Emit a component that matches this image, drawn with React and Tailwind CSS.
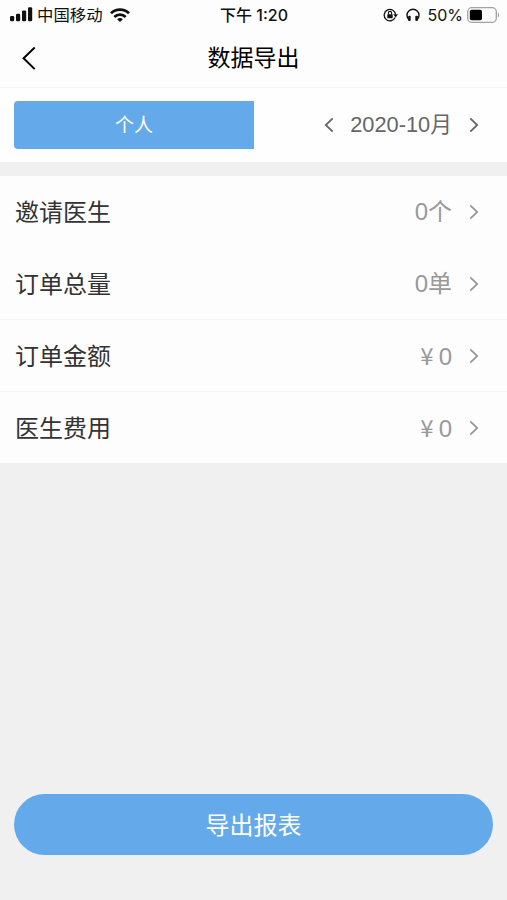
// ============================================
// DATA EXPORT PAGE - MOBILE
// ============================================

const Chevron = ({ left = false, className = "" }) => (
    <svg
        viewBox="0 0 10 16"
        className={`h-4 w-2.5 shrink-0 ${className}`}
        fill="none"
        stroke="currentColor"
        strokeWidth="1.8"
    >
        <path d={left ? "M8.7 1.4 1.8 8l6.9 6.6" : "M1.3 1.4 8.2 8l-6.9 6.6"} />
    </svg>
)

const SignalIcon = () => (
    <svg viewBox="0 0 23 15" className="h-[15px] w-[23px]" fill="currentColor">
        <rect x="0" y="9" width="4.2" height="5.2" rx="1.2" />
        <rect x="6" y="6.8" width="4.2" height="7.4" rx="1.2" />
        <rect x="12" y="3.4" width="4.2" height="10.8" rx="1.2" />
        <rect x="18" y="0.2" width="4.2" height="14" rx="1.2" />
    </svg>
)

const WifiIcon = () => (
    <svg
        viewBox="0 0 20 14"
        className="h-[14px] w-5"
        fill="none"
        stroke="currentColor"
        strokeWidth="2.8"
    >
        <path d="M1 5.2a13 13 0 0 1 18 0" />
        <path d="M4.3 9a8.2 8.2 0 0 1 11.4 0" />
        <path
            d="M10 13.9 7.1 11.3a4.2 4.2 0 0 1 5.8 0z"
            fill="currentColor"
            stroke="none"
        />
    </svg>
)

const RotationLockIcon = () => (
    <svg viewBox="0 0 15 14" className="h-[14px] w-[15px]" fill="none" stroke="currentColor">
        <path d="M12.1 9.5A5.7 5.7 0 1 1 12.6 6.8" strokeWidth="1.3" />
        <path d="M10.3 6.2h4.7l-2.3 3.3z" fill="currentColor" stroke="none" />
        <rect x="4.3" y="6.2" width="5.4" height="4" rx="0.6" fill="currentColor" stroke="none" />
        <path d="M5.4 6.4V5a1.6 1.6 0 0 1 3.2 0v1.4" strokeWidth="1.1" />
    </svg>
)

const HeadphonesIcon = () => (
    <svg viewBox="0 0 14 14" className="h-[14px] w-[14px]" fill="none" stroke="currentColor">
        <path d="M3.2 12C1.6 10.7 1 9 1 7.2a6 6 0 0 1 12 0c0 1.8-.6 3.5-2.2 4.8" strokeWidth="1.4" />
        <rect x="2.1" y="7.8" width="2.6" height="5.2" rx="1" fill="currentColor" stroke="none" />
        <rect x="9.3" y="7.8" width="2.6" height="5.2" rx="1" fill="currentColor" stroke="none" />
    </svg>
)

const BatteryIcon = () => (
    <svg viewBox="0 0 33 16" className="h-4 w-[33px]">
        <rect x="0.7" y="0.7" width="28.6" height="14.6" rx="4" fill="none" stroke="#a3a3a3" strokeWidth="1.3" />
        <rect x="2.8" y="2.8" width="12.2" height="10.4" rx="1.8" fill="#000" />
        <path d="M30.8 5.4c1.7.6 1.7 4.6 0 5.2z" fill="#a3a3a3" />
    </svg>
)

const rows = [
    { id: "invite", label: "邀请医生", value: "0个", border: false },
    { id: "orders", label: "订单总量", value: "0单", border: true },
    { id: "amount", label: "订单金额", currency: "¥", value: "0", border: true },
    { id: "fee", label: "医生费用", currency: "¥", value: "0", border: false },
]

const App = () => {
    return (
        <div className="flex h-[900px] w-[507px] flex-col overflow-hidden bg-[#f0f0f0] font-['Liberation_Sans','Noto_Sans_CJK_SC',sans-serif] text-[#333]">
            {/* STATUS BAR */}
            <div className="grid h-[29px] shrink-0 grid-cols-[1fr_auto_1fr] items-center bg-[#fdfdfd] pr-[7px] pl-[10px] font-['Inter','Noto_Sans_CJK_SC',sans-serif] text-[#111]">
                <div className="flex items-center">
                    <SignalIcon />
                    <span className="mr-[7px] ml-[4px] pt-0.5 text-[16.4px] leading-[27px]">中国移动</span>
                    <WifiIcon />
                </div>
                <span className="-ml-0.5 pt-0.5 text-[16px] leading-[27px] font-medium">下午 1:20</span>
                <div className="flex items-center justify-end">
                    <RotationLockIcon />
                    <span className="w-[8px]" />
                    <HeadphonesIcon />
                    <span className="mr-[4px] ml-[7px] pt-0.5 text-[16px] leading-[27px]">50%</span>
                    <BatteryIcon />
                </div>
            </div>

            {/* HEADER */}
            <header className="grid h-[59px] shrink-0 grid-cols-[1fr_auto_1fr] items-center border-b border-[#f5f5f5] bg-[#fdfdfd] px-[21px] text-black">
                <button aria-label="返回">
                    <svg viewBox="0 0 15 24" className="h-6 w-[15px]" fill="none" stroke="currentColor" strokeWidth="2">
                        <path d="M13.7 1.5 2.6 12.3l11.1 10.8" />
                    </svg>
                </button>
                <h1 className="text-[23px] leading-[58px]">数据导出</h1>
            </header>

            {/* FILTER BAR */}
            <div className="flex h-[74px] shrink-0 items-center justify-between bg-[#fefefe] pr-[28px] pl-[14px]">
                <button className="h-12 w-60 rounded-l-[4px] bg-[#64aaeb] pt-[3px] text-[19px] text-white">
                    个人
                </button>
                <div className="flex items-center text-[#666]">
                    <Chevron left />
                    <span className="mr-[17px] ml-[16px] text-[21.8px] leading-8">2020-10月</span>
                    <Chevron />
                </div>
            </div>

            {/* STATS LIST */}
            <ul className="mt-[14px] shrink-0 bg-[#fdfdfd]">
                {rows.map((row) => (
                    <li
                        key={row.id}
                        className={`flex h-[72px] items-center border-b pr-[28px] pl-[15px] text-[24px] last:h-[71px] last:border-b-0 ${
                            row.border ? "border-[#f5f5f5]" : "border-transparent"
                        }`}
                    >
                        <span className="flex-1 pt-0.5">{row.label}</span>
                        <span className="mr-[17px] flex items-baseline text-[#999]">
                            {row.currency && (
                                <span className="mr-[5px] font-['Noto_Sans_CJK_SC',sans-serif] text-[24px] leading-9">
                                    {row.currency}
                                </span>
                            )}
                            {row.value}
                        </span>
                        <Chevron className="text-[#999]" />
                    </li>
                ))}
            </ul>

            {/* EXPORT BUTTON */}
            <div className="mt-auto px-[14px] pb-[45px]">
                <button className="block h-[61px] w-full rounded-full bg-[#64aaeb] pt-[3px] text-[24px] text-white">
                    导出报表
                </button>
            </div>
        </div>
    )
}

export default App
